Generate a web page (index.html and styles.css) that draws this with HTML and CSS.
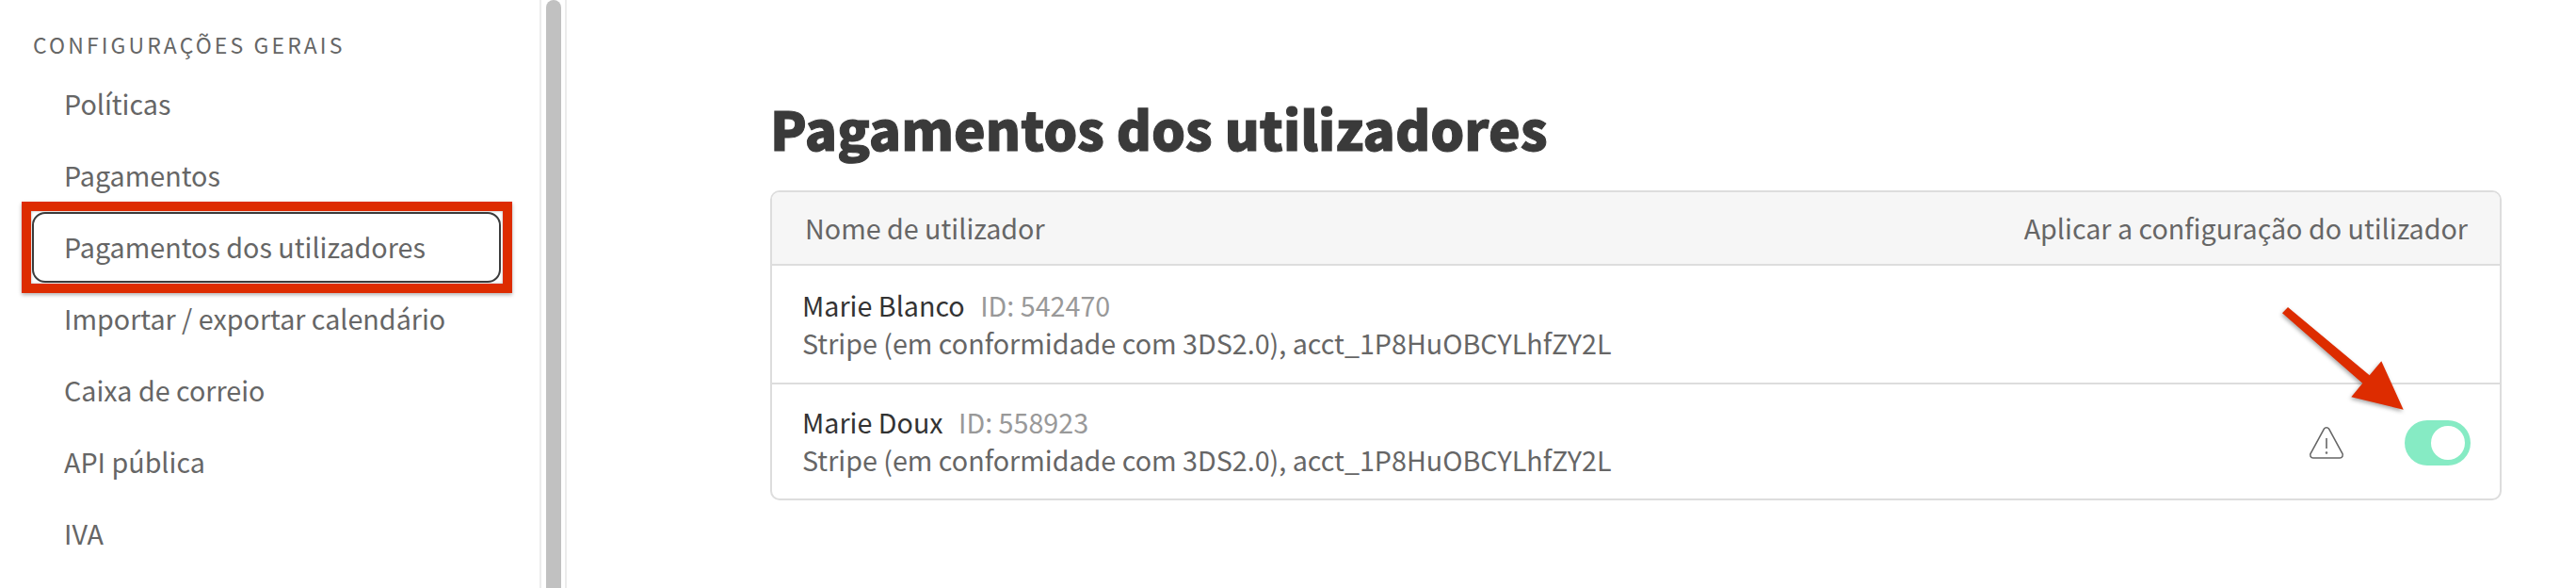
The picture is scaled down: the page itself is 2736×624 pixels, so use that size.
FILE: index.html
```html
<!DOCTYPE html>
<html lang="pt">
<head>
  <meta charset="UTF-8">
  <title>Pagamentos dos utilizadores</title>
  <link rel="stylesheet" href="styles.css">
</head>
<body>
  <!-- menu lateral -->
  <aside class="sidebar">
    <h2>Configurações gerais</h2>
    <nav class="menu">
      <a>Políticas</a>
      <a>Pagamentos</a>
      <a class="active">Pagamentos dos utilizadores</a>
      <a>Importar / exportar calendário</a>
      <a>Caixa de correio</a>
      <a>API pública</a>
      <a>IVA</a>
    </nav>
  </aside>
  <div class="scrollbar"><div class="thumb"></div></div>

  <!-- conteúdo -->
  <main class="content">
    <h1>Pagamentos dos utilizadores</h1>
    <div class="card">
      <div class="card-head">
        <span>Nome de utilizador</span>
        <span>Aplicar a configuração do utilizador</span>
      </div>
      <div class="row">
        <div>
          <p class="name">Marie Blanco <span class="uid">ID: 542470</span></p>
          <p class="acct">Stripe (em conformidade com 3DS2.0), acct_1P8HuOBCYLhfZY2L</p>
        </div>
      </div>
      <div class="row row-last">
        <div>
          <p class="name">Marie Doux <span class="uid">ID: 558923</span></p>
          <p class="acct">Stripe (em conformidade com 3DS2.0), acct_1P8HuOBCYLhfZY2L</p>
        </div>
        <div class="row-actions">
          <svg class="warn" width="38" height="36" viewBox="0 0 38 36" fill="none" stroke="#666" stroke-width="1.600">
            <path d="M16.400 3.200a3 3 0 0 1 5.200 0L35.600 28.800a3.200 3.200 0 0 1-2.800 5.200H5.200a3.200 3.200 0 0 1-2.800-5.200Z"/>
            <path d="M19 13v11"/>
            <circle cx="19" cy="28.500" r="0.500"/>
          </svg>
          <div class="toggle"><div class="knob"></div></div>
        </div>
      </div>
    </div>
  </main>

  <!-- anotações -->
  <div class="mark-box"></div>
  <svg class="mark-arrow" width="136" height="116" viewBox="0 0 136 116">
    <polygon fill="#dd2c00" points="1,7.300 7,1 93.700,73.300 106.300,58.300 129.700,109.700 74.300,96.300 86.300,81.700"/>
  </svg>
</body>
</html>
```

FILE: styles.css
```css
* {
  margin: 0;
  padding: 0;
  box-sizing: border-box;
}
body {
  display: flex;
  height: 624px;
  overflow: hidden;
  background: #fff;
  color: #666;
  font-family: "Noto Sans CJK SC", "Liberation Sans", sans-serif;
  font-size: 28.7px;
  line-height: 40px;
}
/* menu lateral */
.sidebar {
  width: 573px;
  flex: none;
  padding-top: 27px;
}
.sidebar h2 {
  margin-left: 35px;
  font-size: 23px;
  line-height: 40px;
  font-weight: 400;
  letter-spacing: 3.1px;
  text-transform: uppercase;
}
.menu {
  margin-top: 5px;
}
.menu a {
  display: flex;
  align-items: center;
  width: 498px;
  height: 76px;
  margin-left: 34px;
  padding-left: 34px;
  border-radius: 14px;
}
.menu a.active {
  height: 75px;
  margin-top: 1px;
  border: 2px solid #3c3c3c;
  padding: 0 0 1px 32px;
}
.scrollbar {
  width: 29px;
  flex: none;
  padding: 0 5px;
  border-left: 2px solid #ececec;
  border-right: 2px solid #ececec;
}
.thumb {
  width: 16px;
  height: 100%;
  background: #c1c1c1;
  border-radius: 8px 8px 0 0;
}
/* conteúdo */
.content {
  flex: 1;
  padding: 0 79px 0 216px;
}
.content h1 {
  margin-top: 95px;
  height: 107px;
  font-size: 56.7px;
  line-height: 80px;
  font-weight: 900;
  color: #3a3a3a;
  -webkit-text-stroke: 1px #3a3a3a;
}
.card {
  border: 2px solid #ddd;
  border-radius: 10px;
}
.card-head {
  display: flex;
  justify-content: space-between;
  align-items: center;
  height: 76px;
  padding: 0 34px 0 35px;
  background: #f6f6f6;
  border-radius: 8px 8px 0 0;
}
.row {
  display: flex;
  justify-content: space-between;
  align-items: center;
  height: 126px;
  padding: 0 31px 0 32px;
  border-top: 2px solid #ddd;
}
.row-last {
  height: 123px;
  padding-bottom: 1px;
}
.name {
  color: #333;
}
.uid {
  margin-left: 10px;
  color: #999;
}
.row-actions {
  display: flex;
  align-items: center;
  gap: 64px;
  margin-top: 3px;
}
.toggle {
  width: 70px;
  height: 48px;
  padding: 6px 6px 6px 28px;
  background: #86ebc4;
  border-radius: 24px;
}
.knob {
  width: 36px;
  height: 36px;
  background: #fff;
  border-radius: 50%;
}
/* anotações */
.mark-box {
  position: absolute;
  left: 23px;
  top: 214px;
  width: 521px;
  height: 97px;
  border: 10px solid #dd2c00;
  box-shadow: 0 2px 4px rgba(0,0,0,0.3), inset 0 0 3px rgba(0,0,0,0.3);
}
.mark-arrow {
  position: absolute;
  left: 2423px;
  top: 325px;
  filter: drop-shadow(-1px 2px 2px rgba(0,0,0,0.35));
}
```
